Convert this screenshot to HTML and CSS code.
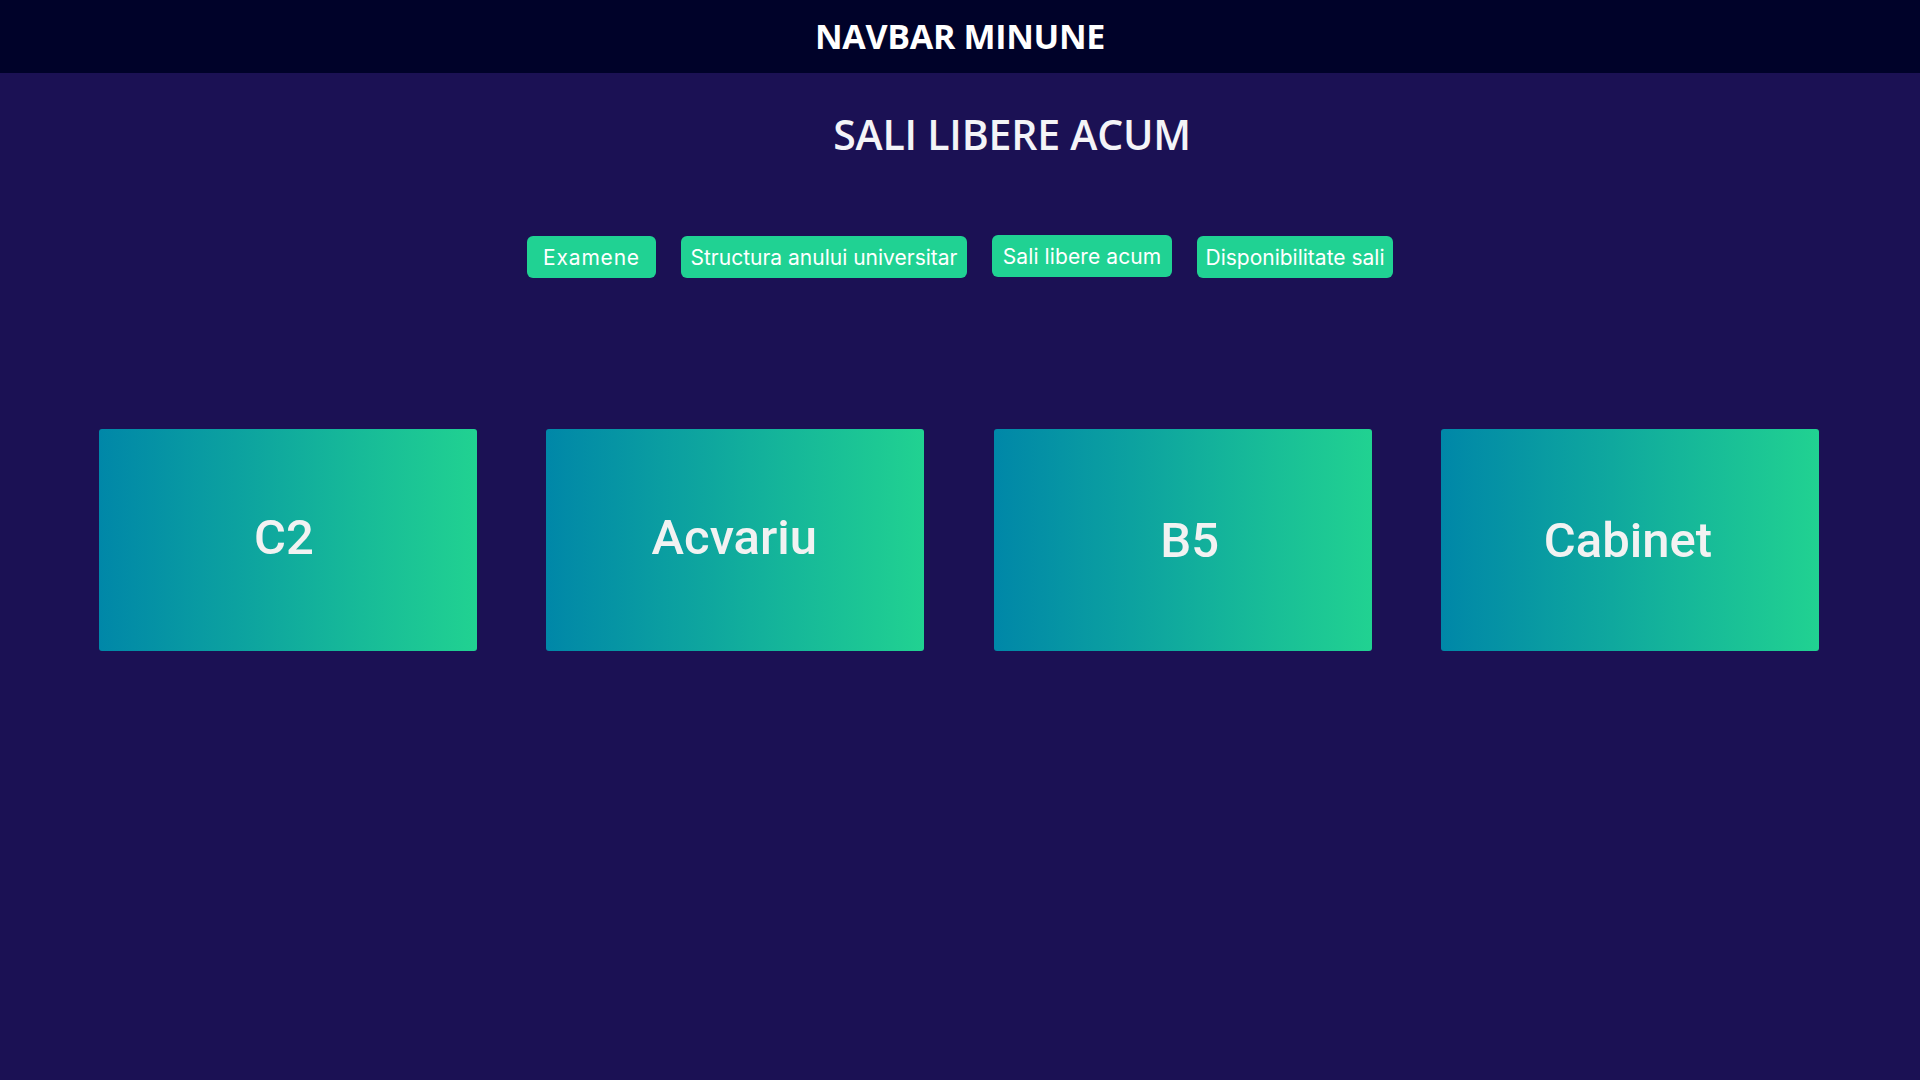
FILE: index.html
```html
<!DOCTYPE html>
<html lang="ro">
<head>
<meta charset="utf-8">
<title>Sali libere acum</title>
<link rel="stylesheet" href="styles.css">
</head>
<body>
<header class="navbar">NAVBAR MINUNE</header>
<main class="content">
  <h1 class="title">SALI LIBERE ACUM</h1>
  <nav class="links">
    <a class="btn btn-exam" href="#">Examene</a>
    <a class="btn btn-struct" href="#">Structura anului universitar</a>
    <a class="btn btn-sali" href="#">Sali libere acum</a>
    <a class="btn btn-disp" href="#">Disponibilitate sali</a>
  </nav>
  <section class="rooms">
    <div class="room"><span class="room-name c2">C2</span></div>
    <div class="room"><span class="room-name acv">Acvariu</span></div>
    <div class="room"><span class="room-name b5">B5</span></div>
    <div class="room"><span class="room-name cab">Cabinet</span></div>
  </section>
</main>
</body>
</html>
```
FILE: styles.css
```css
* { box-sizing: border-box; }
html, body { margin: 0; padding: 0; }
body {
  background: #1b1154;
  min-height: 1080px;
  font-family: "Open Sans", "Liberation Sans", sans-serif;
  color: #fff;
}
.navbar {
  height: 73px;
  line-height: 73px;
  background: #000229;
  text-align: center;
  font-weight: 700;
  font-size: 34px;
  letter-spacing: -0.3px;
  color: #fff;
}
.content { display: flex; flex-direction: column; align-items: center; }
.title {
  margin: 33px 0 0 104px;
  font-size: 41px;
  font-weight: 600;
  line-height: 56px;
  letter-spacing: -0.2px;
  color: #f4f4f8;
}
.links {
  margin-top: 74px;
  display: flex;
  gap: 25px;
}
.btn {
  display: flex;
  align-items: center;
  justify-content: center;
  height: 42px;
  padding: 0 8px;
  background: #20d293;
  border-radius: 6px;
  color: #fff;
  text-decoration: none;
  font-family: "Inter", "Open Sans", sans-serif;
  font-size: 21px;
  font-weight: 400;
  white-space: nowrap;
}
.btn-exam { width: 129px; letter-spacing: 0.8px; }
.btn-struct { width: 286px; letter-spacing: 0; }
.btn-sali { width: 180px; transform: translateY(-1px); letter-spacing: 0.1px; }
.btn-disp { width: 196px; letter-spacing: 0; }
.rooms {
  margin-top: 151px;
  width: 100%;
  padding: 0 101px 0 99px;
  display: grid;
  grid-template-columns: repeat(4, 378px);
  justify-content: space-between;
}
.room {
  height: 222px;
  border-radius: 3px;
  background: linear-gradient(90deg, #0087a8 0%, #0fa89e 45%, #21d291 100%);
  display: flex;
  align-items: center;
  justify-content: center;
}
.room-name {
  font-family: "Roboto", sans-serif;
  font-size: 49px;
  font-weight: 500;
  color: #f2f2f2;
}
.room-name.c2 { transform: translate(-4px, -3px); }
.room-name.acv { transform: translate(-1px, -3px); }
.room-name.b5 { transform: translate(7px, 0); }
.room-name.cab { transform: translate(-2px, 0); }
```
